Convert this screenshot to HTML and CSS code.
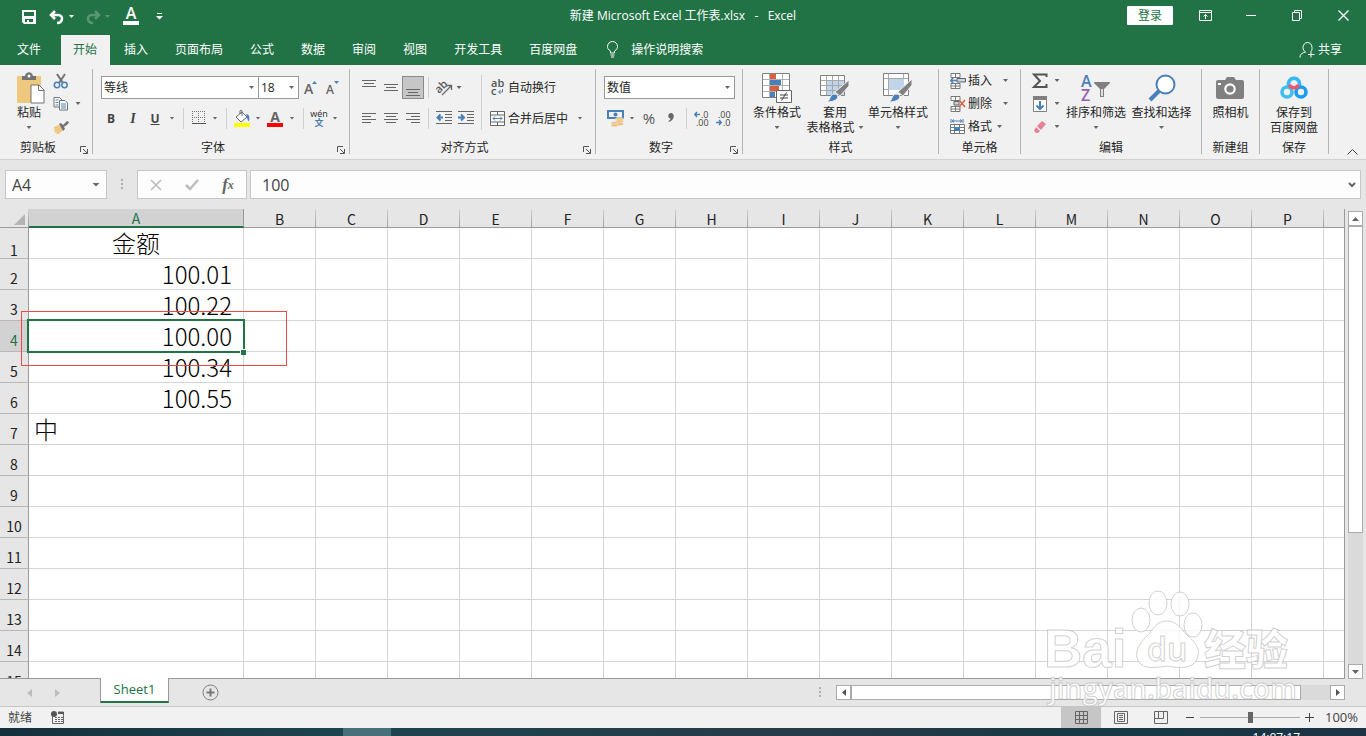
FILE: index.html
```html
<!DOCTYPE html>
<html lang="zh-CN">
<head>
<meta charset="utf-8">
<title>新建 Microsoft Excel 工作表.xlsx - Excel</title>
<link rel="stylesheet" href="styles.css">
</head>
<body>
<header class="titlebar">
  <div class="quick">
    <button class="tbtn" aria-label="保存"><svg width="14" height="14"><path d="M0 0h14v14H2l-2-2zM2 2v4h10V2zM3 9v3h2v-2h2v2h4V9z" fill="#fff" fill-rule="evenodd"/></svg></button>
    <button class="tbtn undo" aria-label="撤消"><svg width="16" height="14"><path d="M6 1L2 5l4 4M2 5h7c6 0 5 8-1 8" fill="none" stroke="#fff" stroke-width="2.500"/></svg><i class="caret light"></i></button>
    <button class="tbtn redo" aria-label="恢复"><svg width="16" height="14"><path d="M10 1l4 4-4 4M14 5H7c-6 0-5 8 1 8" fill="none" stroke="#fff" stroke-width="2.500"/></svg><i class="caret light"></i></button>
    <button class="tbtn" aria-label="字体颜色"><svg width="16" height="17"><text x="8" y="11" text-anchor="middle" font-size="16" font-weight="600" fill="#fff">A</text><path d="M0 13h16v4H0z" fill="#fff"/></svg></button>
    <button class="tbtn" aria-label="自定义快速访问工具栏"><svg width="7" height="7"><path d="M1 0h5v1H1zM0 3h7L3.500 6.500z" fill="#fff"/></svg></button>
  </div>
  <h1 class="title">新建 Microsoft Excel 工作表.xlsx &nbsp;&nbsp;-&nbsp;&nbsp; Excel</h1>
  <div class="window">
    <button class="login">登录</button>
    <button class="wbtn" aria-label="功能区显示选项"><svg width="13" height="11"><path d="M.5.5h12v10H.5zM.5 2.500h12M6.500 9V4.500M4.500 6.500l2-2 2 2" fill="none" stroke="#fff"/></svg></button>
    <button class="wbtn" aria-label="最小化"><svg width="11" height="11"><path d="M0 5.500h10" stroke="#fff"/></svg></button>
    <button class="wbtn" aria-label="还原"><svg width="11" height="11"><path d="M.5 2.500h7v8h-7zM2.500 2.500v-2h7v8h-2" fill="none" stroke="#fff"/></svg></button>
    <button class="wbtn" aria-label="关闭"><svg width="11" height="11"><path d="M.5.5l10 10M10.500.5l-10 10" stroke="#fff" stroke-width="1.300"/></svg></button>
  </div>
</header>
<nav class="tabs">
  <button class="tab file">文件</button>
  <button class="tab active">开始</button>
  <button class="tab">插入</button>
  <button class="tab">页面布局</button>
  <button class="tab">公式</button>
  <button class="tab">数据</button>
  <button class="tab">审阅</button>
  <button class="tab">视图</button>
  <button class="tab">开发工具</button>
  <button class="tab">百度网盘</button>
  <button class="tell"><svg width="13" height="17"><path d="M4.500 12v-2C2 8.500 1.500 7 1.500 5.500a5 5 0 0 1 10 0C11.500 7 11 8.500 8.500 10v2zM4.500 14h4M5 16h3" fill="none" stroke="#fff"/></svg>操作说明搜索</button>
  <button class="share"><svg width="16" height="17"><path d="M12 10.500c1-1 1-2 1-4a4.500 5 0 0 0-9 0c0 2 1 3.500 2.500 4.500C3 12 1 13 1 16.500M12 10.500v6M9 13.500h6.500" fill="none" stroke="#fff"/></svg>共享</button>
</nav>

<section class="ribbon" aria-label="开始">
  <div class="group clipboard">
    <div class="body">
      <button class="big paste"><span class="pic"><svg width="29" height="32"><path d="M1 4h24v27H1z" fill="#edc87e"/><path d="M6 8V4h3c1-5 7-5 8 0h3v4z" fill="#737373"/><circle cx="13" cy="4" r="1.500" fill="#fff"/><path d="M15 13h8l5 5v13H15z" fill="#fff" stroke="#737373"/><path d="M22.500 13v5.500H28" fill="none" stroke="#737373"/></svg></span><span>粘贴</span><span class="line"><i class="caret"></i></span></button>
      <div class="stack">
        <div class="row"><button class="ib" aria-label="剪切"><svg width="16" height="16"><path d="M4 1l6 9M12 1l-6 9" stroke="#737373" stroke-width="2"/><g fill="none" stroke="#4a80b8" stroke-width="1.500"><circle cx="4" cy="12" r="2.700"/><circle cx="11.500" cy="12" r="2.700"/></g></svg></button></div>
        <div class="row"><button class="ib" aria-label="复制"><svg width="16" height="15"><path d="M1 1.500h5.500L9 4v7H1z" fill="#fff" stroke="#737373"/><path d="M6.500 4.500H12L14.500 7v7h-8z" fill="#fff" stroke="#737373"/><path d="M2.500 4h3M2.500 6.500h3M2.500 9h3M8 8h5M8 10h5M8 12h5" stroke="#4a80b8"/></svg></button><button class="cb" aria-label="复制选项"><i class="caret"></i></button></div>
        <div class="row"><button class="ib" aria-label="格式刷"><svg width="16" height="16"><path d="M1 8l5-2 4 5-4 4H3l1-2-2 1z" fill="#edc87e"/><path d="M6 5l2-1 2 2 4-4 2 1-1 2-4 3 1 2-2 2z" fill="#737373"/></svg></button></div>
      </div>
    </div>
    <div class="label"><span>剪贴板</span><button class="launch" aria-label="剪贴板设置"><svg width="8" height="8"><path d="M.5 6V.5H6M3 3l4 4M7.500 3v4.500H3" fill="none" stroke="#555"/></svg></button></div>
  </div>

  <div class="group font">
    <div class="body rows">
      <div class="row tall">
        <span class="combo family"><select aria-label="字体"><option>等线</option></select></span><span class="combo size"><select aria-label="字号"><option>18</option></select></span>
        <button class="ib grow" aria-label="增大字号"><svg width="14" height="16"><text x="0" y="14" font-size="14" font-weight="600" fill="#666">A</text><path d="M8 4l2.500-3L13 4z" fill="#4a80b8"/></svg></button>
        <button class="ib" aria-label="减小字号"><svg width="14" height="16"><text x="0" y="14" font-size="12" font-weight="600" fill="#666">A</text><path d="M8 1h5l-2.500 3z" fill="#4a80b8"/></svg></button>
      </div>
      <div class="row">
        <button class="ib"><b>B</b></button><button class="ib"><em>I</em></button><button class="ib"><u>U</u></button><button class="cb" aria-label="下划线选项"><i class="caret"></i></button>
        <i class="sep"></i>
        <button class="ib narrow" aria-label="边框"><svg width="14" height="14"><path d="M.5 0v13M6.500 0v13M12.500 0v13M0 .5h13M0 6.500h13" stroke="#737373" stroke-dasharray="1 1"/><path d="M0 12.500h14" stroke="#555"/></svg></button><button class="cb" aria-label="边框选项"><i class="caret"></i></button>
        <i class="sep"></i>
        <button class="ib narrow" aria-label="填充颜色"><svg width="16" height="17"><path d="M2 7l6-5 5 5-6 5zM6 4V1c0-1 2-1 2 0v5" fill="#fff" stroke="#666"/><path d="M12 4c3 0 4 3 3 7-1 0-2-2-2-4z" fill="#4a80b8"/><path d="M0 13h16v4H0z" fill="#ff0"/></svg></button><button class="cb" aria-label="填充颜色选项"><i class="caret"></i></button>
        <button class="ib" aria-label="字体颜色"><svg width="16" height="17"><text x="8" y="12" text-anchor="middle" font-size="14" font-weight="700" fill="#666">A</text><path d="M0 13h16v4H0z" fill="#f00"/></svg></button><button class="cb" aria-label="字体颜色选项"><i class="caret"></i></button>
        <i class="sep"></i>
        <button class="ib narrow pinyin"><span>wén</span><span class="zi">文</span></button><button class="cb" aria-label="拼音选项"><i class="caret"></i></button>
      </div>
    </div>
    <div class="label"><span>字体</span><button class="launch" aria-label="字体设置"><svg width="8" height="8"><path d="M.5 6V.5H6M3 3l4 4M7.500 3v4.500H3" fill="none" stroke="#555"/></svg></button></div>
  </div>

  <div class="group align">
    <div class="body">
      <div class="rows">
        <div class="row tall">
          <button class="ib" aria-label="顶端对齐"><svg width="14" height="18"><path d="M0 1.500h14M2 4.500h10M0 7.500h14" stroke="#666"/></svg></button><button class="ib" aria-label="垂直居中"><svg width="14" height="18"><path d="M0 5.500h14M2 8.500h10M0 11.500h14" stroke="#666"/></svg></button><button class="ib on" aria-label="底端对齐"><svg width="14" height="18"><path d="M0 10.500h14M2 13.500h10M0 16.500h14" stroke="#666"/></svg></button>
          <i class="sep"></i>
          <button class="ib" aria-label="方向"><svg width="17" height="16"><text x="0" y="11" font-size="11" font-weight="600" fill="#555" transform="rotate(-45 5 9)">ab</text><path d="M6 15L15 6M11 5.500h4.500V10" fill="none" stroke="#666" stroke-width="1.300"/></svg></button><button class="cb slim" aria-label="方向选项"><i class="caret"></i></button>
        </div>
        <div class="row">
          <button class="ib" aria-label="左对齐"><svg width="14" height="12"><path d="M0 1.500h14M0 4.500h9M0 7.500h14M0 10.500h9" stroke="#666"/></svg></button><button class="ib" aria-label="居中"><svg width="14" height="12"><path d="M0 1.500h14M2 4.500h10M0 7.500h14M2 10.500h10" stroke="#666"/></svg></button><button class="ib" aria-label="右对齐"><svg width="14" height="12"><path d="M0 1.500h14M5 4.500h9M0 7.500h14M5 10.500h9" stroke="#666"/></svg></button>
          <i class="sep"></i>
          <button class="ib" aria-label="减少缩进量"><svg width="16" height="14"><path d="M0 .5h16M9 3.500h7M9 6.500h7M9 9.500h7M0 12.500h16" stroke="#666"/><path d="M7 6.500H2M4.500 3.500l-3 3 3 3" fill="none" stroke="#4a80b8" stroke-width="2"/></svg></button><button class="ib" aria-label="增加缩进量"><svg width="16" height="14"><path d="M0 .5h16M9 3.500h7M9 6.500h7M9 9.500h7M0 12.500h16" stroke="#666"/><path d="M0 6.500h5M3 3.500l3 3-3 3" fill="none" stroke="#4a80b8" stroke-width="2"/></svg></button>
        </div>
      </div>
      <i class="sep long"></i>
      <div class="rows">
        <div class="row tall"><button class="wide"><svg class="wic" width="15" height="17"><text x="1" y="8" font-size="11" font-weight="600" fill="#555">ab</text><text x="1" y="16" font-size="11" font-weight="600" fill="#555">c</text><path d="M12.500 10v3H9M10.500 11l-2 2 2 2" fill="none" stroke="#4a80b8"/></svg>自动换行</button></div>
        <div class="row"><button class="wide"><svg class="wic" width="15" height="15"><path d="M.5.5h14v14H.5zM.5 4h14M.5 11h14M7.500.5V4M7.500 11v3.500" fill="#fff" stroke="#666"/><path d="M3 7.500h9M5 5.500l-2 2 2 2M10 5.500l2 2-2 2" fill="none" stroke="#4a80b8"/></svg>合并后居中</button><button class="cb merge" aria-label="合并选项"><i class="caret"></i></button></div>
      </div>
    </div>
    <div class="label"><span>对齐方式</span><button class="launch" aria-label="对齐设置"><svg width="8" height="8"><path d="M.5 6V.5H6M3 3l4 4M7.500 3v4.500H3" fill="none" stroke="#555"/></svg></button></div>
  </div>

  <div class="group number">
    <div class="body rows">
      <div class="row tall"><span class="combo format"><select aria-label="数字格式"><option>数值</option></select></span></div>
      <div class="row">
        <button class="ib" aria-label="会计数字格式"><svg width="17" height="17"><path d="M1 1h15v7H1z" fill="none" stroke="#4a80b8" stroke-width="2"/><circle cx="8.500" cy="4.500" r="2" fill="#4a80b8"/><g fill="#edc07c" stroke="#f1f1f1" stroke-width=".5"><ellipse cx="12.500" cy="9" rx="4" ry="1.700"/><ellipse cx="12.500" cy="11.500" rx="4" ry="1.700"/><ellipse cx="12.500" cy="14" rx="4" ry="1.700"/><ellipse cx="7.500" cy="13" rx="3.500" ry="1.500"/><ellipse cx="7.500" cy="15.300" rx="3.500" ry="1.500"/></g></svg></button><button class="cb" aria-label="会计格式选项"><i class="caret"></i></button>
        <button class="ib percent">%</button><button class="ib" aria-label="千位分隔样式"><svg width="6" height="10"><path d="M3 0c4 0 4 7-2 9l-.5-1c2-1 2-2 2-2.500C-.5 5.500-.5 0 3 0z" fill="#666"/></svg></button>
        <i class="sep"></i>
        <button class="ib" aria-label="增加小数位数"><svg width="16" height="15"><text x="7" y="7" font-size="9" fill="#444">.0</text><text x="2" y="15" font-size="9" fill="#444">.00</text><path d="M6 3.500H1M3 1L.8 3.500 3 6" fill="none" stroke="#4a80b8" stroke-width="1.500"/></svg></button><button class="ib" aria-label="减少小数位数"><svg width="16" height="15"><text x="2" y="7" font-size="9" fill="#444">.00</text><text x="7" y="15" font-size="9" fill="#444">.0</text><path d="M0 11.500h5M3 9l2.200 2.500L3 14" fill="none" stroke="#4a80b8" stroke-width="1.500"/></svg></button>
      </div>
    </div>
    <div class="label"><span>数字</span><button class="launch" aria-label="数字设置"><svg width="8" height="8"><path d="M.5 6V.5H6M3 3l4 4M7.500 3v4.500H3" fill="none" stroke="#555"/></svg></button></div>
  </div>

  <div class="group styles">
    <div class="body">
      <button class="big cond"><span class="pic"><svg width="30" height="30"><path d="M.5.5h27v24H.5z" fill="#fff" stroke="#808080"/><path d="M8 1h6v5H8zM8 13h9v5H8z" fill="#d9603e"/><path d="M8 7h11v5H8zM8 19h5v5H8z" fill="#4a80b8"/><path d="M7.500 1v23M20.500 1v23M1 6.500h26M1 12.500h26M1 18.500h26" stroke="#b0b0b0"/><path d="M14.500 17.500h15v12h-15z" fill="#fff" stroke="#666"/><path d="M18 22h8M18 25h8M24.500 19.500l-5 8" stroke="#444"/></svg></span><span>条件格式</span><span class="line"><i class="caret"></i></span></button>
      <button class="big tablefmt"><span class="pic"><svg width="30" height="30"><path d="M.5 2.500h24v20H.5z" fill="#fff" stroke="#808080"/><path d="M7 8h17v14H7z" fill="#c0d4ea"/><path d="M6.500 3v19M12.500 3v19M18.500 3v19M1 7.500h23M1 12.500h23M1 17.500h23" stroke="#a8a8a8"/><path d="M29 7v6l-9 10-5-4z" fill="#808080" stroke="#f1f1f1"/><path d="M7 29c3-1 3-8 7-8 3 0 5 2 3 5-2 2-6 3-10 3z" fill="#4a80b8" stroke="#f1f1f1"/></svg></span><span>套用</span><span class="line">表格格式<i class="caret"></i></span></button>
      <button class="big cellstyle"><span class="pic"><svg width="30" height="30"><path d="M.5.5h25v22H.5z" fill="#fff" stroke="#808080"/><path d="M5.500 1v21M20.500 1v21M1 5.500h24M1 16.500h24" stroke="#a8a8a8"/><path d="M6 6h15v11H6z" fill="#c0d4ea"/><path d="M29 6v6l-9 11-5-4z" fill="#808080" stroke="#f1f1f1"/><path d="M6 29c3-1 3-8 7-8 3 0 5 2 3 5-2 2-6 3-10 3z" fill="#4a80b8" stroke="#f1f1f1"/></svg></span><span>单元格样式</span><span class="line"><i class="caret"></i></span></button>
    </div>
    <div class="label"><span>样式</span></div>
  </div>

  <div class="group cells">
    <div class="body stack">
      <button class="wide"><svg class="wic" width="16" height="16"><path d="M1 .5h9v4H1zM5.500.5v4M1 10.500h9v5H1zM5.500 10.500v5M1 13h9" fill="#fff" stroke="#777"/><path d="M7 5.500h8.500v3.500H7z" fill="#c0d4ea" stroke="#666"/><path d="M7 7.500H1M3 5L.8 7.500 3 10" fill="none" stroke="#4a80b8" stroke-width="1.500"/></svg>插入<i class="caret"></i></button>
      <button class="wide"><svg class="wic" width="16" height="16"><path d="M1 .5h9v4H1zM5.500.5v4M1 10.500h9v5H1zM5.500 10.500v5M1 13h9" fill="#fff" stroke="#777"/><path d="M4 5.500h5v3.500H4z" fill="#c0d4ea" stroke="#666"/><path d="M9 4l6 7M15 4l-6 7" stroke="#d9603e" stroke-width="1.500"/></svg>删除<i class="caret"></i></button>
      <button class="wide fmt"><svg class="wic" width="16" height="16"><path d="M1 0v4M13 0v4M2 2h10M4 .5L2 2l2 1.500M10 .5L12 2l-2 1.500" fill="none" stroke="#4a80b8"/><path d="M.5 5.500h14v9H.5zM.5 8.500h14M.5 11.500h14M4.500 5.500v9M9.500 5.500v9" fill="#fff" stroke="#777"/><path d="M4 8h6v4H4z" fill="#4a80b8"/></svg>格式<i class="caret"></i></button>
    </div>
    <div class="label"><span>单元格</span></div>
  </div>

  <div class="group edit">
    <div class="body">
      <div class="stack">
        <div class="row"><button class="ib" aria-label="自动求和"><svg width="16" height="16"><path d="M14.500 4V1.500H2l6 6.500-6 6h12.500V11" fill="none" stroke="#555" stroke-width="2"/></svg></button><button class="cb" aria-label="求和选项"><i class="caret"></i></button></div>
        <div class="row"><button class="ib" aria-label="填充"><svg width="14" height="16"><path d="M.5.5h13v15H.5z" fill="#fff" stroke="#808080"/><path d="M0 0h14v4H0z" fill="#808080"/><path d="M7 5v8M3.500 9.500L7 13l3.500-3.500" fill="none" stroke="#4a80b8" stroke-width="2"/></svg></button><button class="cb" aria-label="填充选项"><i class="caret"></i></button></div>
        <div class="row"><button class="ib" aria-label="清除"><svg width="14" height="14"><path d="M4 6l5-5 4 3-5 6z" fill="#e98198"/><path d="M3 7l4 4-2 2H3L1 10.500z" fill="#e98198"/></svg></button><button class="cb" aria-label="清除选项"><i class="caret"></i></button></div>
      </div>
      <button class="big sort"><span class="pic"><svg width="30" height="28"><text x="0" y="13" font-size="16" font-weight="600" fill="#4a80b8">A</text><text x="0" y="27" font-size="16" font-weight="600" fill="#9560b5">Z</text><path d="M13 8h16v1l-6 6v8h-4v-8l-6-6z" fill="#808080"/><path d="M21 15v7" stroke="#fff" stroke-width="1.500"/></svg></span><span>排序和筛选</span><span class="line"><i class="caret"></i></span></button>
      <button class="big find"><span class="pic"><svg width="28" height="28"><circle cx="17.500" cy="10.500" r="9" fill="#fff" stroke="#4a80b8" stroke-width="2"/><path d="M11 17L2 26" stroke="#4a80b8" stroke-width="4"/></svg></span><span>查找和选择</span><span class="line"><i class="caret"></i></span></button>
    </div>
    <div class="label"><span>编辑</span></div>
  </div>

  <div class="group camera">
    <div class="body"><button class="big"><span class="pic"><svg width="28" height="23"><path d="M2 4h7l2-3h7l2 3h6q2 0 2 2v15q0 2-2 2H2q-2 0-2-2V6q0-2 2-2z" fill="#808080"/><circle cx="14" cy="13" r="4.700" fill="#808080" stroke="#fff" stroke-width="2.200"/><path d="M2 7h3v2H2z" fill="#fff"/></svg></span><span>照相机</span></button></div>
    <div class="label"><span>新建组</span></div>
  </div>

  <div class="group pan">
    <div class="body"><button class="big"><span class="pic"><svg width="28" height="24"><g fill="none" stroke-width="3.600"><path d="M9 10a5.500 5.500 0 1 1 10 0" stroke="#35b8f4"/><circle cx="7" cy="16" r="5" stroke="#3ec0ee"/><circle cx="21" cy="16" r="5" stroke="#1a9df0"/><path d="M9.500 9a5 5 0 0 0 9 0" stroke="#f0546e"/></g></svg></span><span>保存到</span><span class="line">百度网盘</span></button></div>
    <div class="label"><span>保存</span></div>
  </div>
  <button class="collapse" aria-label="折叠功能区"><svg width="11" height="6"><path d="M.5 5.500l5-5 5 5" fill="none" stroke="#444"/></svg></button>
</section>

<section class="formula">
  <span class="namebox"><input aria-label="名称框" value="A4"><i class="caret big-caret"></i></span>
  <i class="dots"></i>
  <div class="fx">
    <button aria-label="取消"><svg width="12" height="12"><path d="M1 1l10 10M11 1L1 11" stroke="#bdbdbd" stroke-width="1.700"/></svg></button>
    <button aria-label="输入"><svg width="14" height="12"><path d="M1 6l4 4 8-9" fill="none" stroke="#bdbdbd" stroke-width="2.500"/></svg></button>
    <button aria-label="插入函数"><em>f</em><em class="x">x</em></button>
  </div>
  <div class="entry"><input aria-label="编辑栏" value="100"><button aria-label="展开编辑栏"><svg width="8" height="6"><path d="M1 1l3 3 3-3" fill="none" stroke="#666" stroke-width="2"/></svg></button></div>
</section>

<main class="sheet">
  <div class="grid">
    <table>
      <colgroup><col class="c-row"><col class="c-a"><col span="15" class="c-n"><col></colgroup>
      <thead><tr><th class="corner"><svg width="12" height="11"><path d="M11 0v11H0z" fill="#b4b4b4"/></svg></th><th class="sel">A</th><th>B</th><th>C</th><th>D</th><th>E</th><th>F</th><th>G</th><th>H</th><th>I</th><th>J</th><th>K</th><th>L</th><th>M</th><th>N</th><th>O</th><th>P</th><th class="rest"></th></tr></thead>
      <tbody>
        <tr><th class="first">1</th><td class="mid">金额</td><td><td><td><td><td><td><td><td><td><td><td><td><td><td><td><td></tr>
        <tr><th>2</th><td class="num">100.01</td><td><td><td><td><td><td><td><td><td><td><td><td><td><td><td><td></tr>
        <tr><th>3</th><td class="num">100.22</td><td><td><td><td><td><td><td><td><td><td><td><td><td><td><td><td></tr>
        <tr><th class="sel">4</th><td class="num current">100.00<i class="cursor"></i><i class="handle"></i><i class="mark"></i></td><td><td><td><td><td><td><td><td><td><td><td><td><td><td><td><td></tr>
        <tr><th>5</th><td class="num">100.34</td><td><td><td><td><td><td><td><td><td><td><td><td><td><td><td><td></tr>
        <tr><th>6</th><td class="num">100.55</td><td><td><td><td><td><td><td><td><td><td><td><td><td><td><td><td></tr>
        <tr><th>7</th><td class="txt">中</td><td><td><td><td><td><td><td><td><td><td><td><td><td><td><td><td></tr>
        <tr><th>8</th><td><td><td><td><td><td><td><td><td><td><td><td><td><td><td><td><td></tr>
        <tr><th>9</th><td><td><td><td><td><td><td><td><td><td><td><td><td><td><td><td><td></tr>
        <tr><th>10</th><td><td><td><td><td><td><td><td><td><td><td><td><td><td><td><td><td></tr>
        <tr><th>11</th><td><td><td><td><td><td><td><td><td><td><td><td><td><td><td><td><td></tr>
        <tr><th>12</th><td><td><td><td><td><td><td><td><td><td><td><td><td><td><td><td><td></tr>
        <tr><th>13</th><td><td><td><td><td><td><td><td><td><td><td><td><td><td><td><td><td></tr>
        <tr><th>14</th><td><td><td><td><td><td><td><td><td><td><td><td><td><td><td><td><td></tr>
        <tr><th>15</th><td><td><td><td><td><td><td><td><td><td><td><td><td><td><td><td><td></tr>
      </tbody>
    </table>
  </div>
  <div class="vscroll">
    <button aria-label="向上滚动"><svg width="7" height="4"><path d="M0 4h7L3.500 0z" fill="#666"/></svg></button>
    <div class="vtrack"><div class="vthumb"></div></div>
    <button aria-label="向下滚动"><svg width="7" height="4"><path d="M0 0h7L3.500 4z" fill="#666"/></svg></button>
  </div>
</main>

<nav class="sheets">
  <button class="nav" aria-label="上一个"><svg width="5" height="8"><path d="M5 0v8L0 4z" fill="#bdbdbd"/></svg></button>
  <button class="nav" aria-label="下一个"><svg width="5" height="8"><path d="M0 0v8l5-4z" fill="#bdbdbd"/></svg></button>
  <button class="sheet-tab">Sheet1</button>
  <button class="add" aria-label="新工作表"><svg width="17" height="17"><circle cx="8.500" cy="8.500" r="7.500" fill="none" stroke="#808080"/><path d="M8.500 4.500v8M4.500 8.500h8" stroke="#777" stroke-width="2"/></svg></button>
  <i class="dots"></i>
  <div class="hscroll">
    <button aria-label="向左滚动"><svg width="4" height="7"><path d="M4 0v7L0 3.500z" fill="#555"/></svg></button>
    <div class="htrack"><div class="hthumb"></div></div>
    <button aria-label="向右滚动"><svg width="4" height="7"><path d="M0 0v7l4-3.500z" fill="#555"/></svg></button>
  </div>
</nav>

<footer class="status">
  <span>就绪</span>
  <button class="macro" aria-label="录制宏"><svg width="14" height="13"><path d="M1.500 5v7.500h11V1H7" fill="none" stroke="#666"/><path d="M7 1h6v2H7z" fill="#555"/><path d="M4 6.500h8M4 8.500h8M4 10.500h8" stroke="#666" stroke-dasharray="2 1"/><circle cx="3" cy="3" r="3" fill="#555"/></svg></button>
  <button class="view on" aria-label="普通"><svg width="13" height="13"><path d="M.5.5h12v12H.5zM4.500.5v12M8.500.5v12M.5 4.500h12M.5 8.500h12" fill="none" stroke="#666"/></svg></button>
  <button class="view" aria-label="页面布局"><svg width="14" height="13"><path d="M.5.5h13v12H.5zM3.500 2.500h7v8h-7zM5 4.500h4M5 6.500h4M5 8.500h4" fill="none" stroke="#666"/></svg></button>
  <button class="view" aria-label="分页预览"><svg width="14" height="13"><path d="M.5.5h13v12H.5zM4.500.5v7M.5 7.500h9M9.500.5v7" fill="none" stroke="#666"/></svg></button>
  <button class="zoom" aria-label="缩小"><svg width="9" height="9"><path d="M0 4.500h8" stroke="#444"/></svg></button>
  <input type="range" min="0" max="100" value="50" aria-label="显示比例">
  <button class="zoom" aria-label="放大"><svg width="9" height="9"><path d="M0 4.500h9M4.500 0v9" stroke="#444"/></svg></button>
  <span class="pct">100%</span>
</footer>
<div class="taskbar"><i class="app"></i><span class="clock">14:07:17</span></div>

<svg class="watermark" width="256" height="124" aria-hidden="true">
  <g fill="#fff" fill-opacity=".8" stroke="#bdbdbd" stroke-opacity=".7">
    <text x="4" y="77" class="w-big">Bai</text>
    <ellipse cx="101" cy="30" rx="9" ry="12"/><ellipse cx="118" cy="13" rx="9" ry="12"/><ellipse cx="140" cy="14" rx="9" ry="12"/><ellipse cx="153" cy="35" rx="9" ry="12"/>
    <path d="M127 31c10 0 14 8 20 14 8 7 13 13 11 21-3 12-14 13-31 10-17 3-27 2-30-8-2-9 4-16 11-23 6-7 9-14 19-14z"/>
    <text x="107" y="71" class="w-du">du</text>
    <text x="164" y="75" class="w-cn">经验</text>
    <text x="9" y="109" class="w-url">jingyan.baidu.com</text>
  </g>
</svg>
</body>
</html>
```

FILE: styles.css
```css
* { box-sizing: border-box; }
html, body { height: 100%; }
body {
  margin: 0;
  display: flex;
  flex-direction: column;
  overflow: hidden;
  position: relative;
  background: #e6e6e6;
  color: #262626;
  font: 12px/15px "Open Sans", "Noto Sans CJK SC", sans-serif;
}
button, input, select { font: inherit; color: inherit; }
button {
  display: flex;
  align-items: center;
  justify-content: center;
  flex: none;
  padding: 0;
  border: 0;
  background: none;
  white-space: nowrap;
}
svg { display: block; flex: none; overflow: visible; }

.caret { width: 5px; height: 3px; flex: none; background: #666; clip-path: polygon(0 0, 100% 0, 50% 100%); }
.caret.light { background: #fff; }
.caret.big-caret { width: 8px; height: 4px; }
.dots { width: 2px; height: 11px; background: repeating-linear-gradient(#adadad 0 2px, transparent 2px 4px); }

/* title bar */
.titlebar {
  display: grid;
  grid-template-columns: 1fr auto 1fr;
  align-items: center;
  height: 35px;
  flex: none;
  padding-bottom: 4px;
  background: #217346;
  color: #fff;
}
.quick { display: flex; align-items: center; gap: 13px; padding: 2px 0 0 22px; }
.tbtn { gap: 4px; height: 20px; }
.redo { opacity: .25; margin-left: -2px; }
.quick .tbtn:last-child { margin-left: 4px; }
.title { margin: 0; font-size: 12px; font-weight: 400; }
.window { display: flex; align-items: center; justify-content: flex-end; }
.login { width: 46px; height: 19px; margin-right: 9px; background: #fff; color: #217346; border-radius: 1px; }
.wbtn { width: 46px; height: 30px; }

/* ribbon tabs */
.tabs { display: flex; height: 30px; flex: none; background: #217346; color: #fff; }
.tab { padding: 0 13px 2px 12px; margin-right: 2px; height: 30px; }
.tab.file { padding: 0 17px 2px; margin-right: 3px; }
.tab.active { background: #f1f1f1; color: #217346; }
.tell { gap: 12px; margin-left: 14px; }
.tell, .share { height: 30px; padding-bottom: 2px; }
.share { gap: 3px; margin-left: auto; margin-right: 24px; }

/* ribbon */
.ribbon { display: flex; height: 95px; flex: none; background: #f1f1f1; border-bottom: 1px solid #d2d2d2; }
.group { display: flex; flex-direction: column; justify-content: space-between; flex: none; margin: 4px 0 5px; border-right: 1px solid #b5b5b5; }
.body { display: flex; }
.label { display: flex; align-items: flex-end; height: 13px; }
.label span { flex: 1; text-align: center; line-height: 12px; }
.launch { width: 16px; height: 8px; }
.row { display: flex; align-items: center; height: 22px; }
.row.tall { height: 23px; }
.rows { display: flex; flex-direction: column; gap: 8px; padding-top: 7px; }
.stack { display: flex; flex-direction: column; }
.ib { width: 22px; height: 22px; }
.ib.narrow { width: 20px; }
.ib.on { height: 23px; background: #c6c6c6; border: 1px solid #8a8a8a; }
.ib b, .ib em, .ib u { color: #444; font-weight: 700; }
.ib em { font-family: "Liberation Serif", serif; font-size: 14px; }
.cb { width: 12px; height: 22px; }
.cb.slim { width: 8px; }
.sep { width: 1px; height: 21px; margin: 0 4px; background: #d0d0d0; }
.sep.long { height: 55px; margin-top: 6px; }
.font .sep { margin: 0 5px; }
.big { flex-direction: column; justify-content: flex-start; padding-top: 1px; }
.pic { display: flex; align-items: center; height: 35px; }
.line { display: flex; align-items: center; height: 15px; gap: 4px; }
.wide { height: 22px; }
.wic { margin-right: 3px; }
.combo { position: relative; display: flex; }
.combo::after {
  content: "";
  position: absolute;
  right: 5px;
  top: 10px;
  width: 5px;
  height: 3px;
  background: #666;
  clip-path: polygon(0 0, 100% 0, 50% 100%);
}
.combo select { appearance: none; width: 100%; height: 23px; padding: 0 0 0 2px; border: 1px solid #999; border-radius: 0; background: #fff; }
.family { width: 158px; }
.size { width: 41px; margin-left: -1px; }
.clipboard { width: 93px; }
.paste { width: 32px; margin: 0 5px 0 13px; }
.paste .pic { padding-left: 3px; }
.font { width: 257px; }
.font .body { padding-left: 8px; }
.font .rows .row:last-child { margin-left: -1px; }
.grow { margin-left: 1px; }
.pinyin { flex-direction: column; font-size: 9px; line-height: 9px; }
.zi { color: #4a80b8; font-weight: 700; }
.align { width: 246px; }
.align .body { padding-left: 8px; }
.align .wide { padding-left: 4px; }
.merge { margin-left: 6px; }
.number { width: 147px; }
.number .body { padding-left: 8px; }
.format { width: 131px; }
.percent { font-size: 15px; color: #555; }
.styles { width: 196px; }
.styles .body { padding-left: 5px; }
.cond, .tablefmt { width: 58px; }
.cellstyle { width: 68px; }
.cells { width: 82px; }
.cells .wide { justify-content: flex-start; padding-left: 11px; height: 23px; }
.cells .wic { margin-right: 2px; }
.cells .caret { margin-left: 11px; }
.cells .fmt .caret { margin-left: 5px; }
.edit { width: 181px; }
.edit .body { padding-left: 8px; }
.cells .row, .edit .row, .clipboard .row { height: 23px; }
.sort { width: 66px; }
.find { width: 65px; }
.camera { width: 58px; }
.pan { width: 69px; }
.camera .body, .pan .body { justify-content: center; }
.collapse { margin: auto 8px 4px auto; }

/* formula bar */
.formula { display: flex; align-items: center; flex: none; height: 49px; padding: 0 5px; font-size: 16px; color: #444; }
.namebox, .fx, .entry { display: flex; align-items: center; height: 29px; border: 1px solid #c6c6c6; background: #fdfdfd; }
.namebox { width: 102px; padding-right: 6px; }
.formula input { flex: 1; min-width: 0; border: 0; padding: 0 0 0 6px; background: none; }
.formula .dots { margin: 0 14px; }
.fx { width: 110px; margin-right: 3px; }
.fx button { flex: 1; }
.fx em { font: italic 700 17px/20px "Liberation Serif", serif; color: #666; }
.fx .x { font-size: 12px; align-self: flex-end; }
.entry { flex: 1; }
.entry input { padding-left: 11px; }
.entry button { width: 16px; height: 27px; }

/* worksheet */
.sheet { display: flex; flex: 1; min-height: 0; padding-right: 3px; }
.grid { flex: 1; min-width: 0; overflow: hidden; border-right: 1px solid #999; border-bottom: 1px solid #999; }
table { width: 100%; table-layout: fixed; border-collapse: separate; border-spacing: 0; font-family: "Noto Sans CJK SC", sans-serif; }
.c-row { width: 29px; }
.c-a { width: 215px; }
.c-n { width: 72px; }
th { padding: 0; font-weight: 400; font-size: 14px; line-height: 16px; background: #e6e6e6; color: #222; }
thead th {
  height: 19px;
  padding-top: 2px;
  border-bottom: 1px solid #999;
  border-right: 1px solid;
  border-image: linear-gradient(#d4d4d4, #999) 1;
}
thead .sel { background: #d2d2d2; color: #217346; border-bottom: 2px solid #217346; border-image: none; border-right-color: #999; line-height: 15px; }
thead .rest { border-image: none; border-right: 0; }
.corner svg { margin: 1px 0 0 14px; }
tbody th { height: 31px; vertical-align: bottom; padding-bottom: 3px; border-right: 1px solid #999; border-bottom: 1px solid #b8b8b8; }
tbody .first { padding-bottom: 0; }
tbody .sel { background: #d2d2d2; color: #217346; }
td { height: 31px; padding: 0; border-right: 1px solid #d4d4d4; border-bottom: 1px solid #d4d4d4; background: #fff; color: #000; font-size: 24px; font-weight: 300; line-height: 30px; }
td:last-child { border-right: 0; }
.mid { text-align: center; }
.num { text-align: right; padding-right: 11px; }
.txt { padding-left: 5px; }
.current { position: relative; }
.cursor { position: absolute; inset: -2px -2px -2px -2px; border: 2px solid #217346; }
.handle { position: absolute; right: -3px; bottom: -4px; width: 6px; height: 6px; background: #217346; border: 1px solid #fff; border-width: 1px 0 0 1px; }
.mark { position: absolute; left: -8px; top: -10px; width: 266px; height: 55px; border: 1px solid #f04848; }
.vscroll { display: flex; flex-direction: column; width: 15px; margin: 2px 0 0 3px; }
.vscroll button { height: 15px; border: 1px solid #ababab; background: #fff; }
.vtrack { flex: 1; background: #dadada; }
.vthumb { height: 70%; background: #fff; border: 1px solid #ababab; }

/* sheet tabs */
.sheets { display: flex; align-items: center; flex: none; height: 27px; padding-right: 21px; }
.nav { width: 28px; }
.nav:first-child { margin-left: 15px; }
.sheet-tab { height: 25px; width: 69px; margin: -1px 0 0 29px; align-self: flex-start; background: #fff; border: 1px solid #999; border-width: 0 1px; border-bottom: 2px solid #217346; color: #217346; font-size: 13px; position: relative; }
.add { margin-left: 33px; }
.sheets .dots { margin: 0 15px 0 auto; }
.hscroll { display: flex; flex: 0 1 509px; }
.hscroll button { width: 15px; height: 15px; border: 1px solid #ababab; background: #fff; }
.htrack { flex: 1; background: #dadada; }
.hthumb { width: 94%; height: 15px; background: #fff; border: 1px solid #ababab; }

/* status bar */
.status { display: flex; align-items: center; flex: none; height: 22px; padding: 0 8px; border-top: 1px solid #c6c6c6; background: #f1f1f1; color: #444; }
.macro { margin: 0 auto 0 19px; }
.view { width: 40px; height: 21px; }
.view.on { background: #c6c6c6; }
.zoom { width: 19px; height: 21px; }
.status input { appearance: none; width: 100px; height: 21px; margin: 0; background: linear-gradient(#ababab, #ababab) center / 100% 1px no-repeat; }
.status input::-webkit-slider-thumb { appearance: none; width: 5px; height: 11px; background: #666; }
.pct { width: 39px; text-align: right; font-size: 13px; }

/* desktop taskbar */
.taskbar { display: flex; flex: none; height: 8px; overflow: hidden; background: linear-gradient(90deg, #14303c, #1d4450 25%, #263c48 60%, #163844 80%, #1c3446); color: #fff; }
.app { width: 48px; margin-left: 343px; background: #47707a; }
.clock { margin: 2px 66px 0 auto; }

/* watermark */
.watermark { position: absolute; right: 70px; bottom: 22px; pointer-events: none; font-family: "Open Sans", "Noto Sans CJK SC", sans-serif; }
.w-big { font-family: "Liberation Sans", sans-serif; font-size: 53px; font-weight: 700; }
.w-du { font-size: 32px; font-weight: 600; }
.w-cn { font-size: 42px; font-weight: 900; }
.w-url { font-size: 28px; font-weight: 600; }
```
